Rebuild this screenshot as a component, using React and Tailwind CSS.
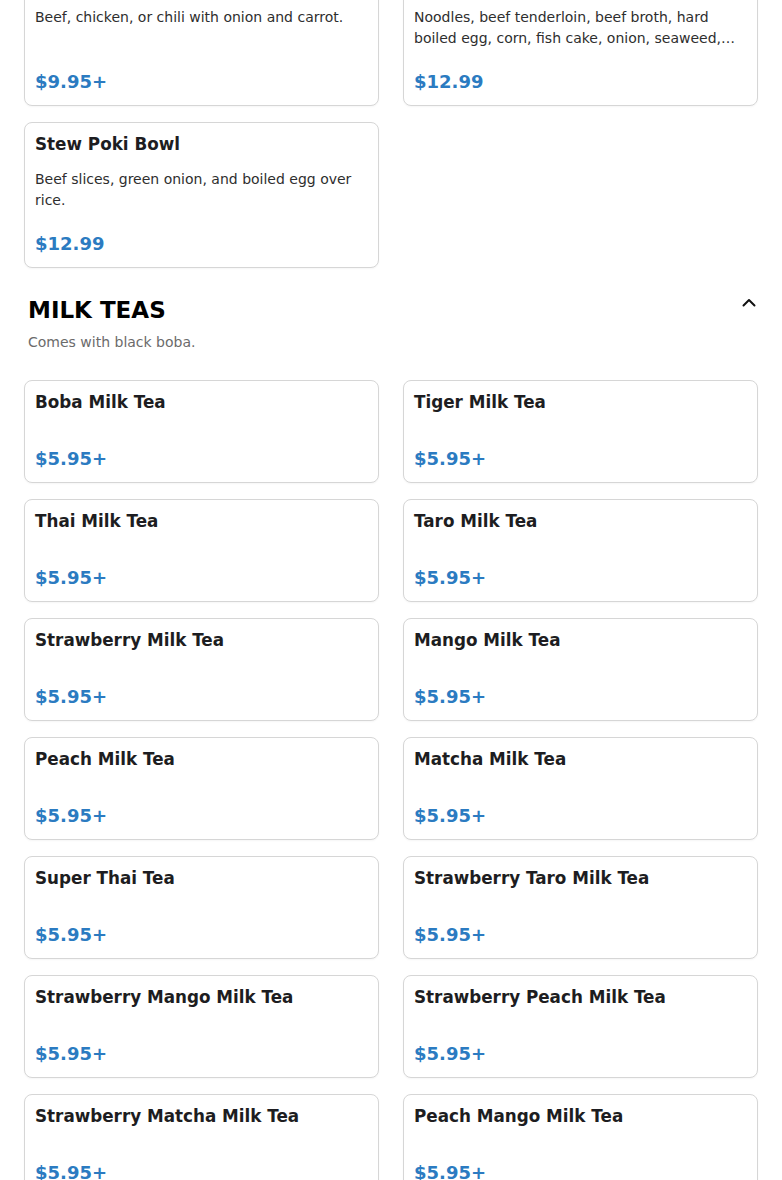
import React from "react";

const top = [
  { name: "Curry Rice", desc: "Beef, chicken, or chili with onion and carrot.", price: "$9.95+" },
  {
    name: "Beef Ramen",
    desc: "Noodles, beef tenderloin, beef broth, hard boiled egg, corn, fish cake, onion, seaweed, and green onion.",
    price: "$12.99",
  },
  { name: "Stew Poki Bowl", desc: "Beef slices, green onion, and boiled egg over rice.", price: "$12.99" },
];

const teas = [
  "Boba Milk Tea",
  "Tiger Milk Tea",
  "Thai Milk Tea",
  "Taro Milk Tea",
  "Strawberry Milk Tea",
  "Mango Milk Tea",
  "Peach Milk Tea",
  "Matcha Milk Tea",
  "Super Thai Tea",
  "Strawberry Taro Milk Tea",
  "Strawberry Mango Milk Tea",
  "Strawberry Peach Milk Tea",
  "Strawberry Matcha Milk Tea",
  "Peach Mango Milk Tea",
];

function Card({ name, desc, price }) {
  return (
    <div className="flex flex-col rounded-lg border border-[#d6d6d6] bg-white px-[10px] pt-[10px] pb-[10px] shadow-[0_1px_2px_rgba(0,0,0,0.04)]">
      <div className="text-[16.8px] leading-[22px] font-bold text-[#1d1d21]">{name}</div>
      {desc ? (
        <>
          <div className="mt-[14px] line-clamp-2 text-[14px] leading-[21px] text-[#2e2e2e]">{desc}</div>
          <div className="mt-auto pt-[20px] text-[18px] leading-[26px] font-bold text-[#2b7bc1]">{price}</div>
        </>
      ) : (
        <div className="mt-auto pt-[33px] text-[18px] leading-[26px] font-bold text-[#2b7bc1]">{price}</div>
      )}
    </div>
  );
}

export default function App() {
  return (
    <div className="min-h-[1180px] bg-white px-6 font-['DejaVu_Sans',sans-serif]">
      <div className="-mt-[40px] grid grid-cols-2 gap-x-6 gap-y-4">
        {top.map((t) => (
          <Card key={t.name} {...t} />
        ))}
      </div>
      <div className="mt-[27px] flex items-start justify-between pl-1 pr-[2px]">
        <div>
          <h2 className="text-[23px] leading-[30px] font-bold text-black">MILK TEAS</h2>
          <p className="mt-[7px] text-[14px] leading-5 text-[#6b6b6b]">Comes with black boba.</p>
        </div>
        <svg width="14" height="9" viewBox="0 0 14 9" className="mt-[3px]" fill="none">
          <path d="M1.5 7.5 L7 2 L12.5 7.5" stroke="#111" strokeWidth="2" strokeLinecap="round" strokeLinejoin="round" />
        </svg>
      </div>
      <div className="mt-[28px] grid grid-cols-2 gap-x-6 gap-y-4 pb-6">
        {teas.map((n) => (
          <Card key={n} name={n} desc="" price="$5.95+" />
        ))}
      </div>
    </div>
  );
}
